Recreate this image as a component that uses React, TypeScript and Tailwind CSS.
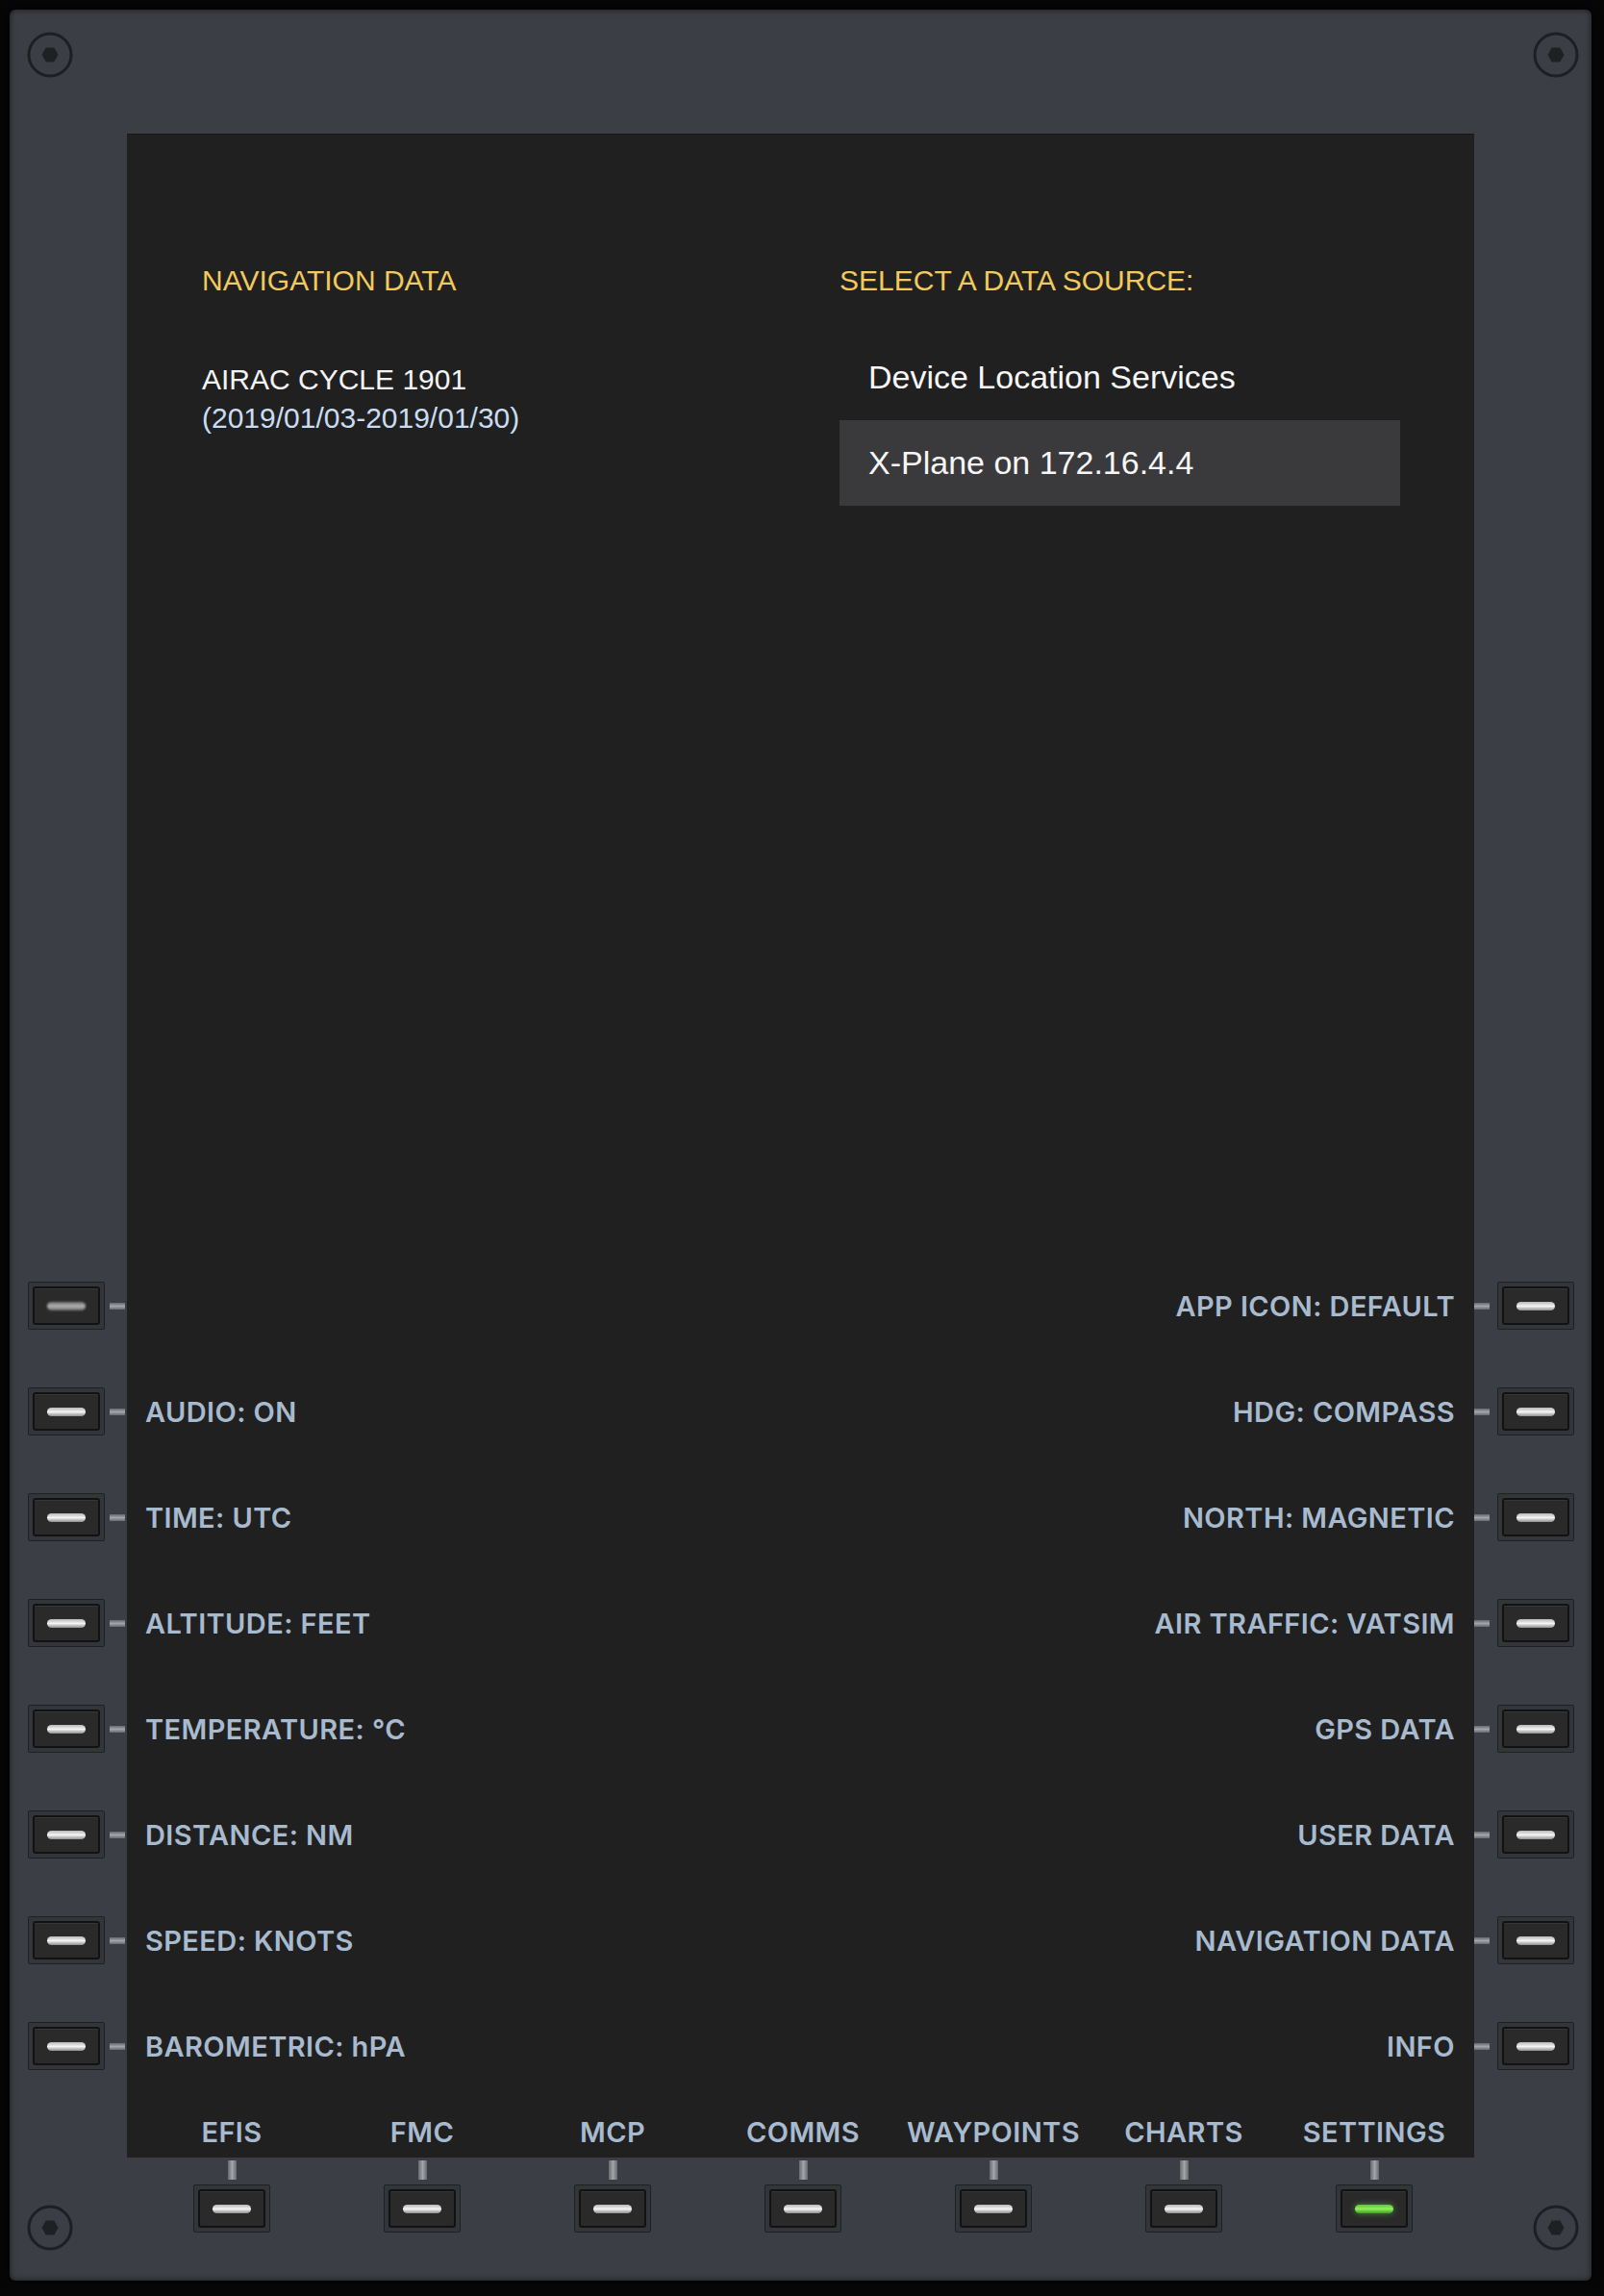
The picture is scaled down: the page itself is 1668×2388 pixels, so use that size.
import React from 'react';

const leftLabels = ['', 'AUDIO: ON', 'TIME: UTC', 'ALTITUDE: FEET', 'TEMPERATURE: °C', 'DISTANCE: NM', 'SPEED: KNOTS', 'BAROMETRIC: hPA'];
const rightLabels = ['APP ICON: DEFAULT', 'HDG: COMPASS', 'NORTH: MAGNETIC', 'AIR TRAFFIC: VATSIM', 'GPS DATA', 'USER DATA', 'NAVIGATION DATA', 'INFO'];
const tabs = ['EFIS', 'FMC', 'MCP', 'COMMS', 'WAYPOINTS', 'CHARTS', 'SETTINGS'];

function Screw() {
  return (
    <svg width="48" height="48" viewBox="0 0 48 48" className="block">
      <circle cx="24" cy="24" r="22" fill="none" stroke="#1d1f22" strokeWidth="3" />
      <polygon points="15.5,24 19.75,16.6 28.25,16.6 32.5,24 28.25,31.4 19.75,31.4" fill="#1f2023" />
    </svg>
  );
}

function Pill({ state }: { state: 'on' | 'off' | 'green' }) {
  if (state === 'green') {
    return <div className="w-[40px] h-[9px] rounded-full bg-linear-to-b from-[#62c53a] via-[#8ef05c] to-[#3f9c22] shadow-[0_0_6px_rgba(110,220,60,0.55)]" />;
  }
  if (state === 'off') {
    return <div className="w-[40px] h-[9px] rounded-full bg-linear-to-b from-[#6e6e6e] via-[#b4b4b4] to-[#6a6a6a] blur-[1px]" />;
  }
  return <div className="w-[40px] h-[9px] rounded-full bg-linear-to-b from-[#b8b8b8] via-[#f4f4f4] to-[#8e8e8e]" />;
}

function KeyButton({ state = 'on' }: { state?: 'on' | 'off' | 'green' }) {
  return (
    <div className="w-[80px] h-[50px] border border-[#1e2023] bg-[#323539] rounded-[2px] p-[4px] shrink-0">
      <div className="w-full h-full rounded-[3px] border-2 border-[#121212] bg-[#2a2a2b] shadow-[inset_0_1px_0_rgba(255,255,255,0.06)] flex items-center justify-center">
        <Pill state={state} />
      </div>
    </div>
  );
}

function HLink() {
  return <div className="w-[16px] h-[7px] bg-linear-to-b from-[#66696d] via-[#a3a6a9] to-[#66696d] shrink-0" />;
}

function VLink() {
  return <div className="w-[9px] h-[20px] bg-linear-to-r from-[#66696d] via-[#a3a6a9] to-[#66696d]" />;
}

export default function App() {
  const label = "font-['Inter',sans-serif] font-semibold text-[29px] tracking-[0.4px] text-[#a8bace] leading-none";
  return (
    <div className="w-[1668px] h-[2388px] bg-[#060606] pt-[10px] pl-[10px]">
      <div className="w-[1645px] h-[2362px] rounded-[6px] bg-[#3b3e44] shadow-[inset_0_0_6px_rgba(0,0,0,0.6),0_0_10px_rgba(0,0,0,0.9)] flex flex-col">
        {/* top band with screws */}
        <div className="h-[129px] flex justify-between pt-[23px] pl-[18px] pr-[13px]">
          <Screw />
          <Screw />
        </div>

        {/* screen: top content */}
        <div className="grid grid-cols-[122px_1401px_122px]">
          <div />
          <div className="h-[1164px] bg-[#202020] shadow-[inset_0_1px_0_#171717] pt-[135px] flex">
            <div className="pl-[78px] w-[741px] font-['Liberation_Sans',Arial,sans-serif] text-[30px]">
              <div className="leading-[35px] text-[#f2c95c]">NAVIGATION DATA</div>
              <div className="mt-[66px] leading-[40px] text-[#f4f4f4]">AIRAC CYCLE 1901</div>
              <div className="leading-[40px] text-[#c9dcf2]">(2019/01/03-2019/01/30)</div>
            </div>
            <div className="w-[583px] font-['Liberation_Sans',Arial,sans-serif]">
              <div className="text-[30px] leading-[35px] text-[#f2c95c]">SELECT A DATA SOURCE:</div>
              <div className="mt-[39px] text-[34px] text-[#f6f6f6]">
                <div className="h-[89px] flex items-center px-[30px]">Device Location Services</div>
                <div className="h-[89px] flex items-center px-[30px] bg-[#3a3a3c]">X-Plane on 172.16.4.4</div>
              </div>
            </div>
          </div>
          <div />
        </div>

        {/* side soft-key rows */}
        {leftLabels.map((l, i) => (
          <div key={i} className="grid grid-cols-[122px_1401px_122px] h-[110px]">
            <div className="flex items-center pl-[19px] gap-[5px]">
              <KeyButton state={i === 0 ? 'off' : 'on'} />
              <HLink />
            </div>
            <div className="bg-[#202020] flex items-center justify-between pl-[19px] pr-[20px]">
              <span className={label}>{l}</span>
              <span className={label}>{rightLabels[i]}</span>
            </div>
            <div className="flex items-center gap-[8px]">
              <HLink />
              <KeyButton />
            </div>
          </div>
        ))}

        {/* bottom tab labels */}
        <div className="grid grid-cols-[122px_1401px_122px]">
          <div />
          <div className="h-[61px] bg-[#202020] pl-[10px] pt-[8px] grid grid-cols-[repeat(7,198px)] items-center">
            {tabs.map((t) => (
              <div key={t} className={`${label} text-center`}>{t}</div>
            ))}
          </div>
          <div />
        </div>

        {/* bottom band with buttons and screws */}
        <div className="h-[128px] grid grid-cols-[132px_repeat(7,198px)_1fr]">
          <div className="pl-[18px] pt-[49px]">
            <Screw />
          </div>
          {tabs.map((t) => (
            <div key={t} className="flex flex-col items-center pt-[3px]">
              <VLink />
              <div className="mt-[5px]">
                <KeyButton state={t === 'SETTINGS' ? 'green' : 'on'} />
              </div>
            </div>
          ))}
          <div className="pl-[66px] pt-[49px]">
            <Screw />
          </div>
        </div>
      </div>
    </div>
  );
}
